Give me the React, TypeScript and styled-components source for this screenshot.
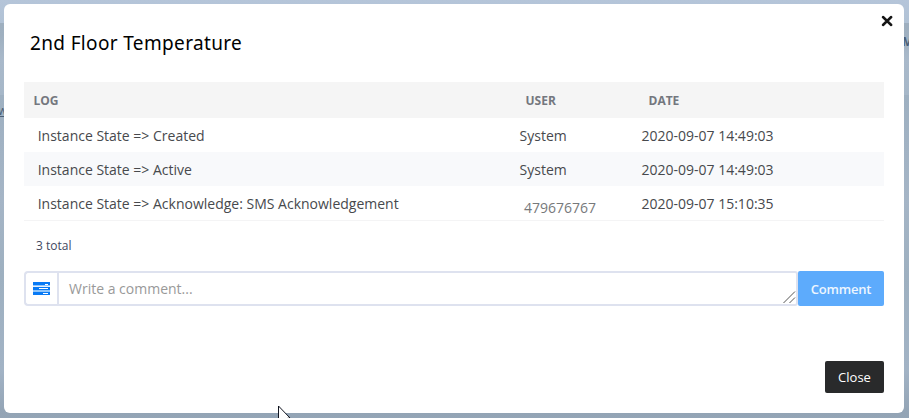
import React from 'react';
import styled, { createGlobalStyle } from 'styled-components';

const GlobalStyle = createGlobalStyle`
  * { box-sizing: border-box; }
  html, body { margin: 0; overflow: hidden; }
  body { font-family: "Open Sans", "Noto Sans", sans-serif; font-size: 14px; color: #47494d; }
`;

const Backdrop = styled.main`
  position: relative;
  width: 909px;
  height: 418px;
  padding: 4px 5px 5px 4px;
  overflow: hidden;
  background: linear-gradient(180deg, #b5c5d9 0, #b1c2d5 23px, #9eafbf 23px, #9fb0c0 36px, #a9b9ca 59px, #a6b7c8 95px, #9eb0c1 95px, #a5b5c6 200px, #9eb0c0 275px, #a2b3c5 370px, #93a4b5 413px, #94a5b6 418px);
`;

const Dialog = styled.section`
  position: relative;
  display: flex;
  flex-direction: column;
  height: 409px;
  padding: 0 20px;
  background: #fff;
  border-radius: 6px;
`;

const BackgroundText = styled.span<{ $x: number; $y: number; $bold?: boolean }>`
  position: absolute;
  left: ${p => p.$x}px;
  top: ${p => p.$y}px;
  font-size: 12px;
  line-height: 16px;
  font-weight: ${p => (p.$bold ? 700 : 400)};
  color: #4c5f76;
  text-decoration: ${p => (p.$bold ? 'none' : 'underline')};
`;

const Header = styled.header`
  display: flex;
  justify-content: space-between;
  height: 78px;
`;

const Title = styled.h1`
  margin: 25px 0 0 6px;
  font-family: "Noto Sans", sans-serif;
  font-size: 19px;
  line-height: 28px;
  font-weight: 400;
  letter-spacing: 0.35px;
  color: #000;
  white-space: nowrap;
`;

const Dismiss = styled.button`
  display: flex;
  width: 12px;
  height: 12px;
  margin: 11px -9px 0 0;
  padding: 0;
  border: 0;
  background: none;
`;

const Row = styled.div<{ $shade?: boolean }>`
  display: grid;
  grid-template-columns: 492px 123px 1fr;
  height: 34px;
  line-height: 35px;
  background: ${p => (p.$shade ? '#f8f9fb' : '#fff')};
  &:last-child { height: 35px; border-bottom: 1px solid #f4f4f5; }
`;

const HeadRow = styled(Row)`
  height: 36px;
  line-height: 37px;
  background: #f5f5f5;
  color: #74777e;
  font-size: 12px;
  font-weight: 700;
`;

const HeadCell = styled.div`
  padding-left: 9.5px;
`;

const LogCell = styled.div`
  padding-left: 13.7px;
  white-space: nowrap;
`;

const UserCell = styled.div<{ $number?: boolean }>`
  padding: ${p => (p.$number ? '4px 0 0 8px' : '0 0 0 3.6px')};
  color: ${p => (p.$number ? '#77797b' : 'inherit')};
`;

const DateCell = styled.div`
  padding-left: 2.5px;
`;

const Total = styled.div`
  height: 50px;
  padding: 17px 12px 0;
  font-size: 12px;
  line-height: 16px;
  color: #3f4961;
`;

const CommentBar = styled.form`
  display: flex;
  height: 35px;
`;

const IconBox = styled.span`
  display: flex;
  align-items: center;
  justify-content: center;
  width: 33px;
  border: 2px solid #dee2ef;
  border-right: 0;
  border-radius: 4px 0 0 4px;
`;

const CommentField = styled.div`
  display: flex;
  flex: 1;
  justify-content: space-between;
  align-items: flex-end;
  padding-left: 10px;
  border: 2px solid #dee2ef;
  border-radius: 0 3px 3px 0;
  line-height: 30px;
  color: #999;
`;

const Button = styled.button<{ $dark?: boolean }>`
  width: ${p => (p.$dark ? 59 : 86)}px;
  height: ${p => (p.$dark ? 32 : 35)}px;
  padding: 0;
  border: 0;
  border-radius: 2px;
  background: ${p => (p.$dark ? '#292a2b' : '#5dabfc')};
  color: ${p => (p.$dark ? '#fff' : '#edf6ff')};
  font: ${p => (p.$dark ? 400 : 600)} 13px "Open Sans", sans-serif;
  letter-spacing: ${p => (p.$dark ? 0 : -0.22)}px;
`;

const Footer = styled.footer`
  display: flex;
  justify-content: flex-end;
  margin-top: 55px;
`;

const Pointer = styled.svg`
  position: absolute;
  left: 278px;
  top: 405px;
`;

const entries = [
  { log: 'Instance State => Created', user: 'System', date: '2020-09-07 14:49:03' },
  { log: 'Instance State => Active', user: 'System', date: '2020-09-07 14:49:03' },
  { log: 'Instance State => Acknowledge: SMS Acknowledgement', user: '479676767', date: '2020-09-07 15:10:35' },
];

export default function App() {
  return (
    <>
      <GlobalStyle />
      <Backdrop>
        <BackgroundText $x={-2} $y={103}>w</BackgroundText>
        <BackgroundText $x={902} $y={34} $bold>M</BackgroundText>
        <Dialog>
          <Header>
            <Title>2nd Floor Temperature</Title>
            <Dismiss aria-label="Dismiss">
              <svg width="12" height="12" viewBox="0 0 12 12">
                <path d="M2 2L10.2 10M10.2 2L2 10" stroke="#151515" strokeWidth="2.5" strokeLinecap="round" />
              </svg>
            </Dismiss>
          </Header>
          <HeadRow>
            <HeadCell>LOG</HeadCell>
            <HeadCell>USER</HeadCell>
            <HeadCell>DATE</HeadCell>
          </HeadRow>
          <div>
            {entries.map((entry, index) => (
              <Row key={index} $shade={index === 1}>
                <LogCell>{entry.log}</LogCell>
                <UserCell $number={index === 2}>{entry.user}</UserCell>
                <DateCell>{entry.date}</DateCell>
              </Row>
            ))}
          </div>
          <Total>3 total</Total>
          <CommentBar>
            <IconBox>
              <svg width="17" height="13" viewBox="0 0 17 13" shapeRendering="crispEdges">
                <path fill="#087af5" d="M0 0H17V3H0zM0 5H17V8H0zM0 10H17V13H0z" />
                <path fill="#8fc5fb" d="M0 3H17V4H0zM0 8H17V10H0z" />
                <path fill="#e4f1fe" d="M0 4H17V5H0z" />
                <path fill="#fff" d="M12 2H15V3H12zM6 6H15V7H6zM10 11H15V12H10z" />
              </svg>
            </IconBox>
            <CommentField>
              <span>Write a comment...</span>
              <svg width="13" height="13" viewBox="0 0 13 13">
                <path d="M0.5 12L12 0.5M6.5 12L12 6.5" fill="none" stroke="#555" />
              </svg>
            </CommentField>
            <Button type="button">Comment</Button>
          </CommentBar>
          <Footer>
            <Button $dark>Close</Button>
          </Footer>
        </Dialog>
        <Pointer width="16" height="20" viewBox="0 0 16 20">
          <path d="M0.5 1V18L5 14L12 13Z" fill="#fff" stroke="#111520" />
        </Pointer>
      </Backdrop>
    </>
  );
}
